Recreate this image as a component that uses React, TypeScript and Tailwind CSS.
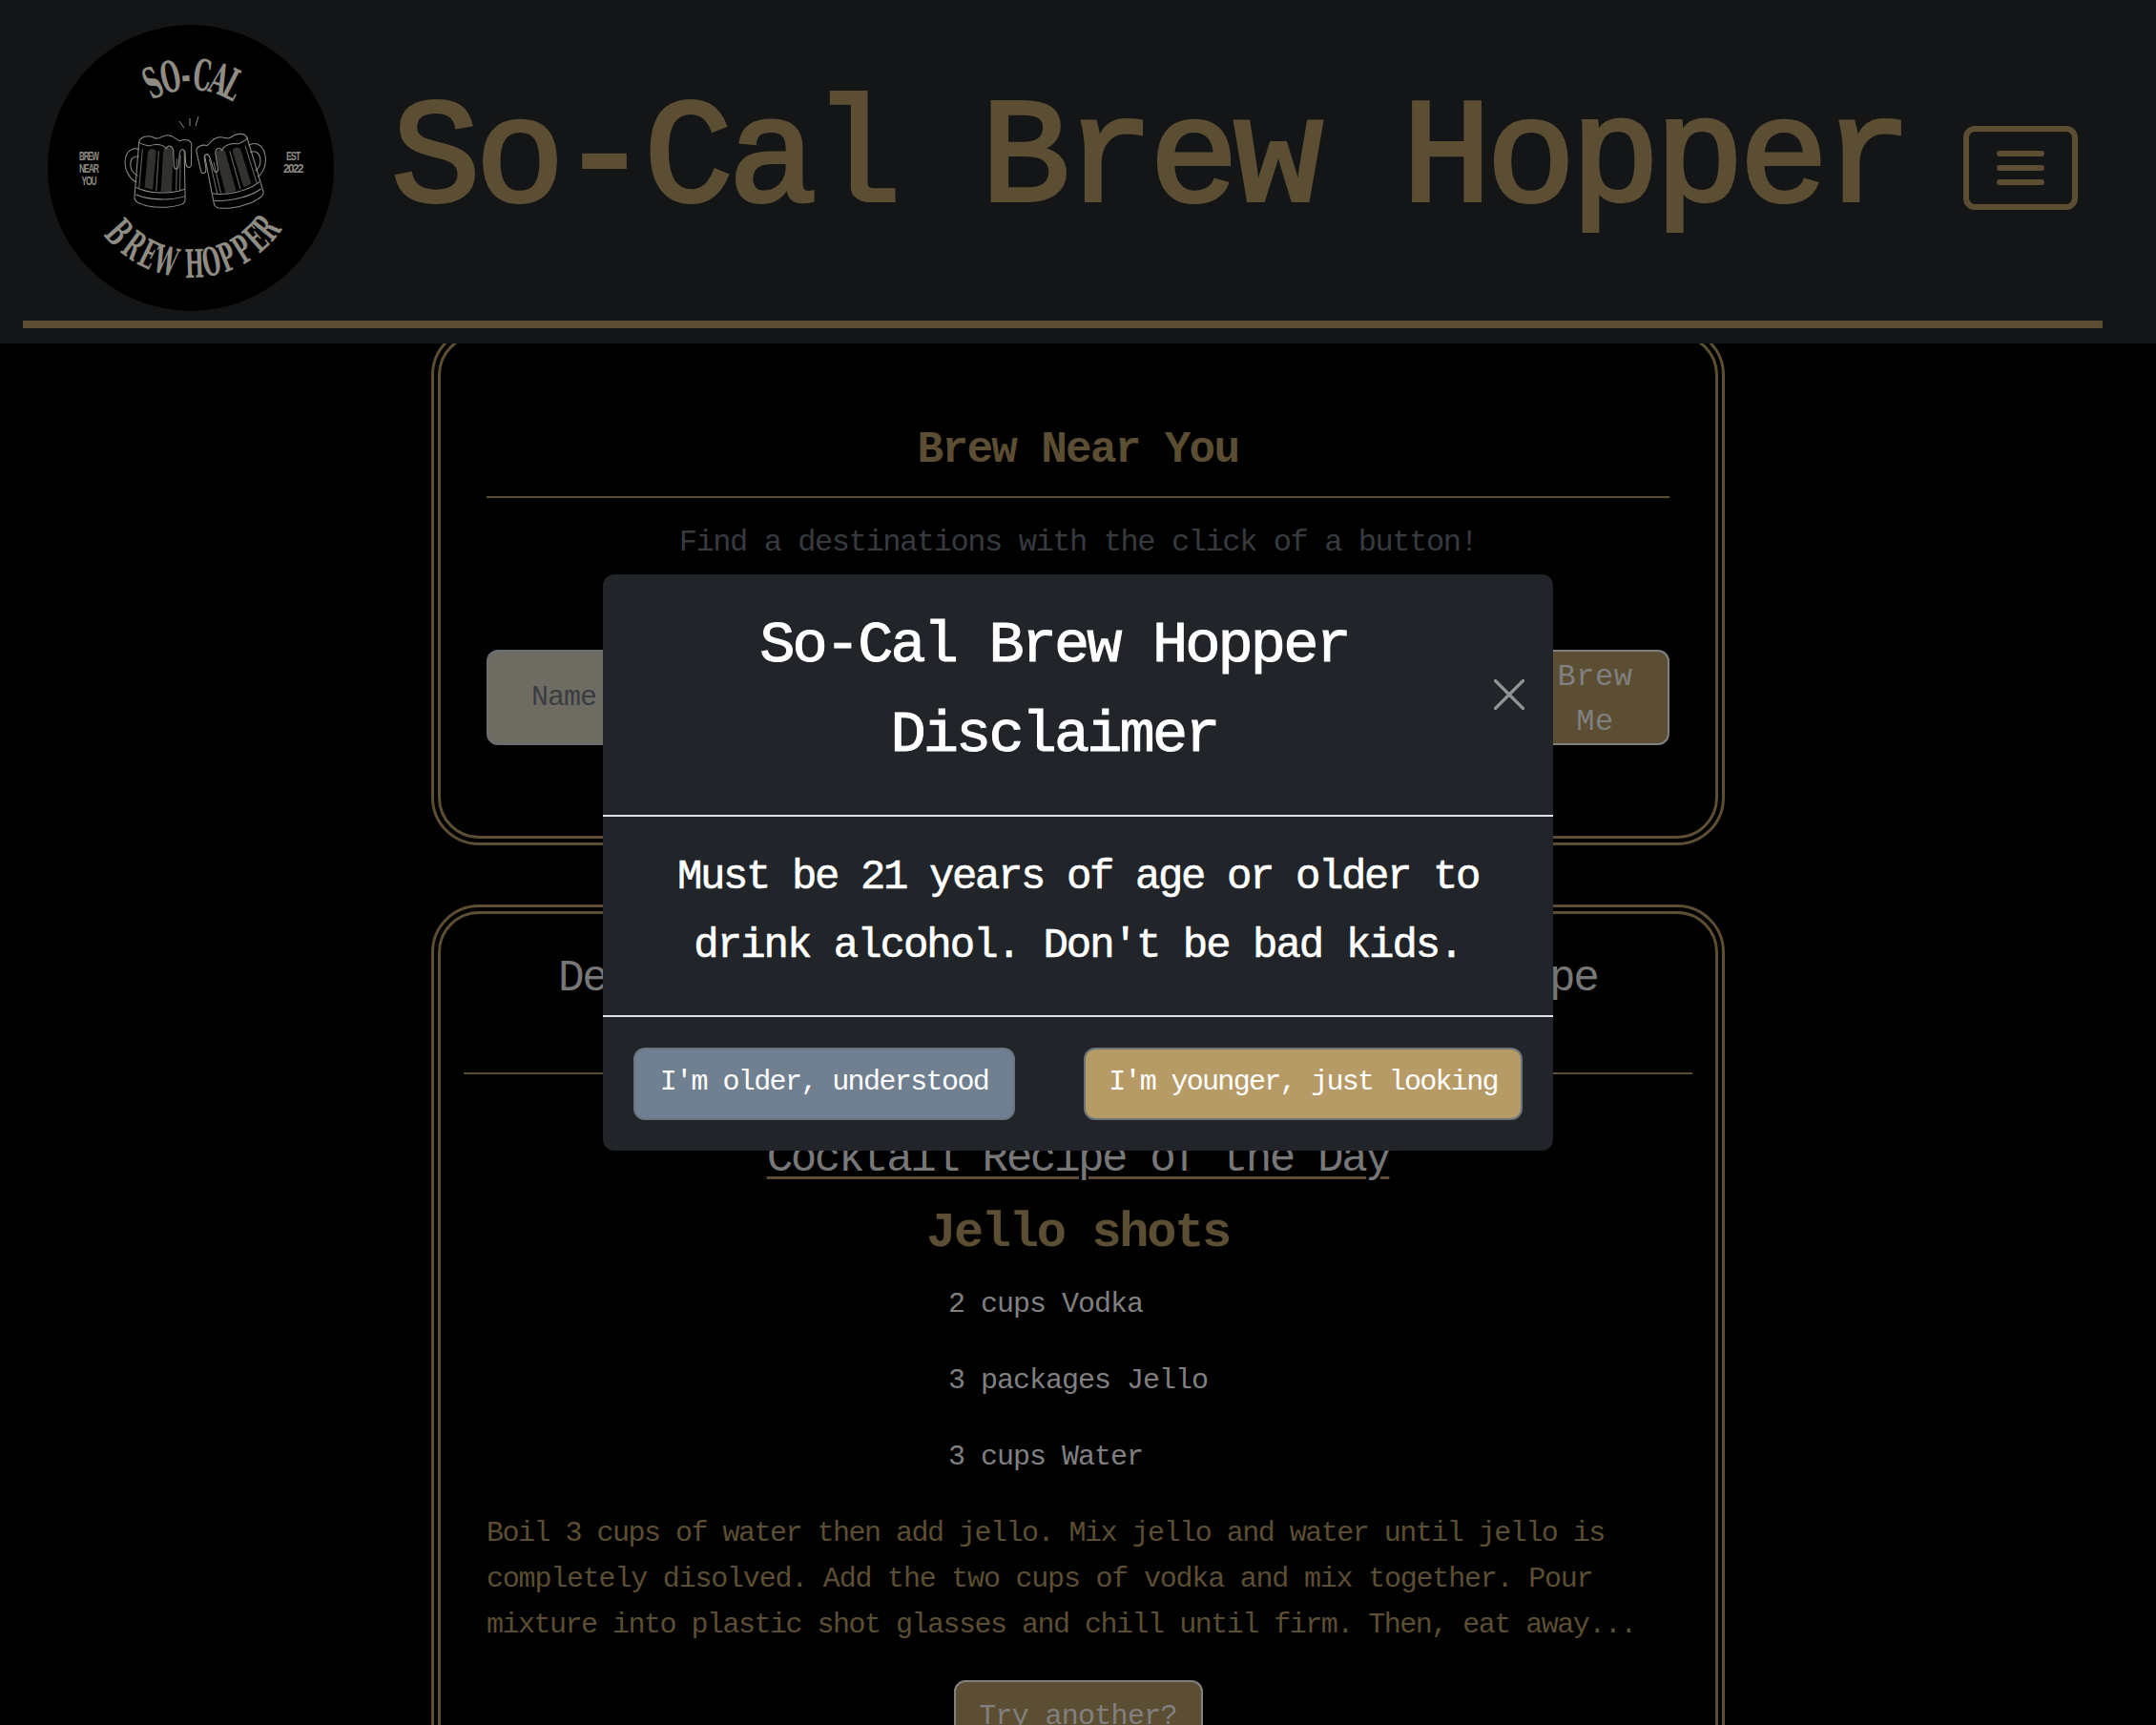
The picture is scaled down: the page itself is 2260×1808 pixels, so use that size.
import React from "react";

const LOGO = "#8f8c84";
const GOLD = "#5c4e33";

function Mug({ transform, id }: { transform: string; id: string }) {
  return (
    <g transform={transform} fill="none" stroke={LOGO} strokeWidth="1.1" strokeLinejoin="round" strokeLinecap="round">
      <path d="M-25 -20 C-30 -22 -40 -20 -40 -6 C-40 5 -33 14 -27 16 M-25 -12 C-30 -13 -34 -10 -34 -4 C-34 3 -30 7 -26 9" />
      <path d="M-25 -28 L-29 33 C-29 39 -22 40 -15 42 C0 45 15 43 23 40 C27 38 27 36 27 33 L25 -22" />
      <path d="M-27 22 C-14 29 12 29 26 23 M-27 30 C-14 36 12 36 26 31" />
      <path d="M-25 -28 C-24 -35 -14 -36 -8 -33 C-3 -30 0 -37 8 -36 C13 -36 16 -31 20 -30 C26 -33 33 -31 33 -26 L33 -4 C33 0 28 0 27 -5 L26 -18 C24 -22 21 -22 20 -16 L19 -2 C18 2 15 2 14 -2 L13 -20 C11 -25 7 -26 5 -21 C3 -26 -6 -27 -14 -24 C-18 -25 -22 -25 -25 -28 Z" fill="#000" />
      <path d="M-15 -18 L-18 22 L-9 24 L-6 -16 C-6 -22 -13 -22 -15 -18 Z" fill={`url(#${id})`} stroke="none" />
      <path d="M2 -19 L0 26 L12 26 L13 -17 C12 -24 4 -24 2 -19 Z" fill={`url(#${id})`} stroke="none" />
      <path d="M-21 -20 L-24 22 M-3 -18 L-5 25 M17 -10 L17 24 M21 -14 L21 24" strokeWidth="0.8" />
    </g>
  );
}

function ArcLetter({ ch, t, r, top, size }: { ch: string; t: number; r: number; top: boolean; size: number }) {
  const a = (t * Math.PI) / 180;
  const x = 150 + r * Math.sin(a);
  const y = 149 + (top ? -1 : 1) * r * Math.cos(a);
  const rot = top ? t : -t;
  return (
    <text transform={`translate(${x.toFixed(1)} ${y.toFixed(1)}) rotate(${rot}) scale(0.58 1)`} fontSize={size} textAnchor="middle">
      {ch}
    </text>
  );
}

function Logo() {
  const topL: [string, number][] = [["S", -24.5], ["O", -13], ["-", -3.5], ["C", 7], ["A", 18], ["L", 27]];
  const botL: [string, number][] = [["B", -48], ["R", -36], ["E", -26], ["W", -15], ["H", 2], ["O", 12], ["P", 21.6], ["P", 32], ["E", 42], ["R", 51]];
  return (
    <svg width="300" height="300" viewBox="0 0 300 300" className="shrink-0">
      <defs>
        <pattern id="hatchA" width="3" height="2" patternUnits="userSpaceOnUse">
          <path d="M0 1 H3" stroke={LOGO} strokeWidth="0.7" />
        </pattern>
        <pattern id="hatchB" width="3" height="2" patternUnits="userSpaceOnUse" patternTransform="rotate(30)">
          <path d="M0 1 H3" stroke={LOGO} strokeWidth="0.7" />
        </pattern>
      </defs>
      <circle cx="150" cy="150" r="150" fill="#000" />
      <g fill={LOGO} fontFamily="'DejaVu Serif Condensed','DejaVu Serif',serif" fontWeight="700">
        {topL.map(([c, t], i) => (
          <ArcLetter key={i} ch={c} t={t} r={81} top size={45} />
        ))}
        {botL.map(([c, t], i) => (
          <ArcLetter key={i} ch={c} t={t} r={116} top={false} size={41} />
        ))}
      </g>
      <g fill={LOGO} fontFamily="'Liberation Sans',sans-serif" fontWeight="700" fontSize="12" textAnchor="middle">
        <text x="43" y="142" textLength="20" lengthAdjust="spacingAndGlyphs">BREW</text>
        <text x="43" y="155" textLength="20" lengthAdjust="spacingAndGlyphs">NEAR</text>
        <text x="43" y="168" textLength="15" lengthAdjust="spacingAndGlyphs">YOU</text>
        <text x="257" y="142" textLength="14" lengthAdjust="spacingAndGlyphs">EST</text>
        <text x="257" y="155" textLength="20" lengthAdjust="spacingAndGlyphs">2022</text>
      </g>
      <Mug id="hatchA" transform="translate(119 150) rotate(1) scale(0.95)" />
      <Mug id="hatchB" transform="translate(192 150) scale(-0.95 0.95) rotate(13)" />
      <g stroke={LOGO} strokeWidth="1">
        <path d="M138 101 L143 108 M149 98 L149 106 M158 96 L155 106" />
      </g>
    </svg>
  );
}

export default function App() {
  return (
    <div className="relative h-screen overflow-hidden bg-black font-['Liberation_Mono','DejaVu_Sans_Mono',monospace] text-[30px] leading-[48px] tracking-[-1.5px] text-[#808080]">
      <header className="relative z-10 h-[360px] bg-[#131517] pt-[26px]">
        <div className="flex h-[310px] items-start pl-[50px]">
          <Logo />
          <h1 className="ml-[60px] mt-[48px] whitespace-nowrap text-[156px] leading-[190px] font-normal tracking-[-5.3px] text-[#5c4e33] [-webkit-text-stroke:4px_#5c4e33]">
            So-Cal Brew Hopper
          </h1>
          <button className="absolute left-[2058px] top-[132px] flex h-[88px] w-[120px] items-center justify-center rounded-[12px] border-[6px] border-[#5c4e33]">
            <svg width="50" height="36" viewBox="0 0 50 36">
              <path d="M3 3 H47 M3 18 H47 M3 33 H47" stroke={GOLD} strokeWidth="6" strokeLinecap="round" />
            </svg>
          </button>
        </div>
        <div className="ml-[24px] mr-[56px] h-[8px] bg-[#5c4e33]" />
      </header>

      <main className="mt-[-17px] flex flex-col items-center">
        <section className="h-[543px] w-[1356px] rounded-[50px] border-[10px] border-double border-[#5c4e33] px-[48px] pt-[91px]">
          <h2 className="text-center text-[46px] leading-[56px] font-bold tracking-[-1.7px] text-[#5c4e33]">Brew Near You</h2>
          <div className="mt-[20px] h-[2px] bg-[#5c4e33]" />
          <p className="mt-[23px] text-center text-[32px] leading-[48px] tracking-[-1.4px] text-[#373b3f]">Find a destinations with the click of a button!</p>
          <div className="mt-[88px] flex h-[100px] gap-[20px]">
            <input
              placeholder="Name"
              className="min-w-0 flex-1 rounded-[12px] border-2 border-[#6a6e72] bg-[#6e6b63] pl-[45px] text-[30px] tracking-[-1px] placeholder:text-[#3a3d41]"
            />
            <button className="w-[156px] rounded-[12px] border-2 border-[#808080] bg-[#5c4e33] pt-[3px] text-[32px] leading-[47px] tracking-[0.5px] text-[#808080]">
              Brew
              <br />
              Me
            </button>
          </div>
        </section>

        <section className="mt-[62px] h-[1100px] w-[1356px] rounded-[50px] border-[10px] border-double border-[#5c4e33] px-[24px] pt-[40px]">
          <div className="grid h-[128px] grid-cols-2 border-b-2 border-[#5c4e33] text-center text-[46px] leading-[56px] tracking-[-2.5px] text-[#777777]">
            <div className="pl-[6px]">Destination Search</div>
            <div className="pl-[68px]">Cocktail Recipe</div>
          </div>
          <div className="px-[24px] text-center">
            <h3 className="mt-[61px] text-[46px] leading-[56px] font-normal tracking-[-2.5px] text-[#777777] underline decoration-[#5c4e33] decoration-[3px] underline-offset-[6px]">
              Cocktail Recipe of the Day
            </h3>
            <h3 className="mt-[19px] text-[52px] leading-[62px] font-bold tracking-[-2.3px] text-[#5c4e33]">Jello shots</h3>
            <ul className="mx-auto mt-[19px] flex w-fit flex-col gap-[32px] text-left tracking-[-1px] text-[#808080]">
              <li>2 cups Vodka</li>
              <li>3 packages Jello</li>
              <li>3 cups Water</li>
            </ul>
            <p className="mt-[32px] whitespace-nowrap text-left text-[#5c4e33]">
              Boil 3 cups of water then add jello. Mix jello and water until jello is
              <br />
              <span className="tracking-[-1.2px]">completely disolved. Add the two cups of vodka and mix together. Pour</span>
              <br />
              mixture into plastic shot glasses and chill until firm. Then, eat away...
            </p>
            <button className="mt-[34px] h-[76px] w-[261px] rounded-[12px] border-2 border-[#808080] bg-[#5c4e33] tracking-[-0.7px] text-[#808080]">Try another?</button>
          </div>
        </section>
      </main>

      <div className="absolute inset-x-0 top-[602px] z-30 flex justify-center">
        <div className="w-[996px] rounded-[12px] bg-[#212529] text-white">
          <div className="flex h-[254px] items-center border-b-2 border-[#dee2e6] px-[32px]">
            <h5 className="flex-1 pb-[8px] text-center text-[62px] leading-[94px] font-normal tracking-[-2.9px] [-webkit-text-stroke:1px_#ffffff]">
              So-Cal Brew Hopper
              <br />
              Disclaimer
            </h5>
            <svg width="32" height="32" viewBox="0 0 32 32" className="ml-[18px] translate-x-[2px]">
              <path d="M1.5 1.5 L30.5 30.5 M30.5 1.5 L1.5 30.5" stroke="#909294" strokeWidth="3.2" strokeLinecap="round" />
            </svg>
          </div>
          <div className="h-[210px] border-b-2 border-[#dee2e6] px-[32px] pt-[27px] text-center text-[44px] leading-[72px] tracking-[-2.4px] [-webkit-text-stroke:0.6px_#ffffff]">
            Must be 21 years of age or older to
            <br />
            <span className="tracking-[-2px]">drink alcohol. Don't be bad kids.</span>
          </div>
          <div className="flex h-[140px] items-start justify-between px-[32px] pt-[32px]">
            <button className="h-[76px] w-[400px] rounded-[12px] border-2 border-[#6c757d] bg-[#708090] pb-[4px] text-[30px] tracking-[-1.6px] text-white">I'm older, understood</button>
            <button className="h-[76px] w-[460px] rounded-[12px] border-2 border-[#6c757d] bg-[#b79b67] pb-[4px] text-[30px] tracking-[-1.7px] text-white">I'm younger, just looking</button>
          </div>
        </div>
      </div>
    </div>
  );
}
